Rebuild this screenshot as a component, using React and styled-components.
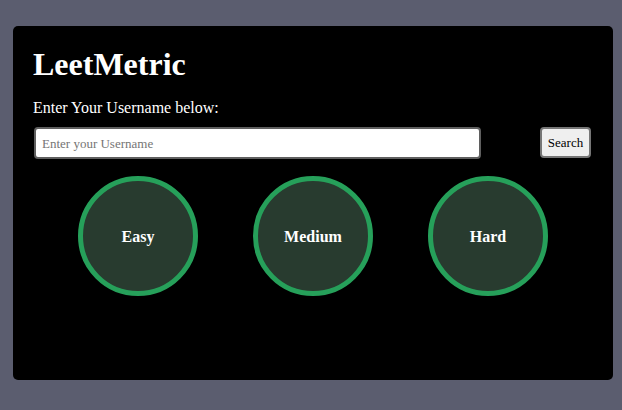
import styled, { createGlobalStyle } from "styled-components";

const GlobalStyle = createGlobalStyle`
  html, body {
    margin: 0;
    padding: 0;
    background: #5b5d6f;
    font-family: "Liberation Serif", "Times New Roman", serif;
  }
`;

const levels = ["Easy", "Medium", "Hard"];

export default function App() {
  return (
    <>
      <GlobalStyle />
      <Page>
        <Container>
          <Title>LeetMetric</Title>
          <Label>Enter Your Username below:</Label>
          <SearchRow>
            <UserInput type="text" placeholder="Enter your Username" />
            <SearchButton type="button">Search</SearchButton>
          </SearchRow>
          <Progress>
            {levels.map((level) => (
              <Circle key={level}>
                <span>{level}</span>
              </Circle>
            ))}
          </Progress>
        </Container>
      </Page>
    </>
  );
}

const Page = styled.main`
  padding: 26px 13px 0;
`;

const Container = styled.div`
  box-sizing: border-box;
  width: 600px;
  height: 354px;
  background: #000;
  border-radius: 5px;
  padding: 20px 20px;
  color: #fff;
`;

const Title = styled.h1`
  margin: 0;
  font-size: 32px;
  font-weight: bold;
  line-height: 37px;
`;

const Label = styled.p`
  margin: 16px 0 0;
  font-size: 16px;
  line-height: 18px;
`;

const SearchRow = styled.div`
  display: flex;
  justify-content: space-between;
  align-items: flex-start;
  margin-top: 10px;
  padding-left: 1px;
  padding-right: 2px;
`;

const UserInput = styled.input`
  box-sizing: border-box;
  width: 447px;
  height: 32px;
  padding: 1px 6px 0;
  border: 2px solid #5f5f5f;
  border-radius: 4px;
  background: #fff;
  font-family: "Liberation Serif", "Times New Roman", serif;
  font-size: 13px;
  outline: none;

  &::placeholder {
    color: #757575;
  }
`;

const SearchButton = styled.button`
  box-sizing: border-box;
  width: 51px;
  height: 31px;
  padding: 1px 0 0;
  border: 2px solid #767676;
  border-radius: 4px;
  background: #efefef;
  color: #000;
  font-family: "Liberation Serif", "Times New Roman", serif;
  font-size: 13px;
`;

const Progress = styled.div`
  display: flex;
  justify-content: center;
  gap: 55px;
  margin-top: 17px;
`;

const Circle = styled.div`
  box-sizing: border-box;
  width: 120px;
  height: 120px;
  padding-top: 2px;
  border-radius: 50%;
  border: 5px solid #26a05a;
  background: #283b2f;
  display: flex;
  align-items: center;
  justify-content: center;
  font-size: 16px;
  font-weight: bold;
`;
